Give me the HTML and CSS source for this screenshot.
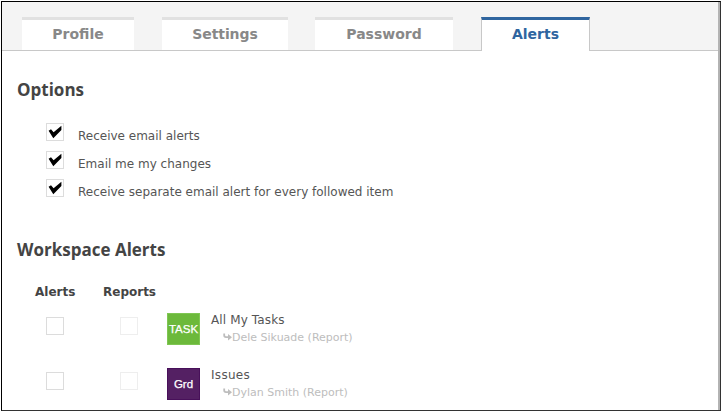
FILE: index.html
```html
<!DOCTYPE html>
<html lang="en">
<head>
<meta charset="utf-8">
<title>Alerts</title>
<link rel="stylesheet" href="styles.css">
</head>
<body>
<div class="window">
  <nav class="tabs">
    <a class="tab profile"><span>Profile</span></a>
    <a class="tab settings"><span>Settings</span></a>
    <a class="tab password"><span>Password</span></a>
    <a class="tab active"><span>Alerts</span></a>
  </nav>
  <main>
    <h2 class="options-title">Options</h2>
    <ul class="options">
      <li><i class="box"><svg viewBox="0 0 16 16"><path d="M1.6 6.8 4 5.2 6.6 8.2 14.4 1.8V6L6.3 14.2Z"/></svg></i><span>Receive email alerts</span></li>
      <li><i class="box"><svg viewBox="0 0 16 16"><path d="M1.6 6.8 4 5.2 6.6 8.2 14.4 1.8V6L6.3 14.2Z"/></svg></i><span>Email me my changes</span></li>
      <li><i class="box"><svg viewBox="0 0 16 16"><path d="M1.6 6.8 4 5.2 6.6 8.2 14.4 1.8V6L6.3 14.2Z"/></svg></i><span>Receive separate email alert for every followed item</span></li>
    </ul>
    <h2 class="workspace-title">Workspace Alerts</h2>
    <div class="columns"><b class="c1">Alerts</b><b class="c2">Reports</b></div>
    <div class="row">
      <i class="box"></i><i class="box faint"></i>
      <div class="tile green">TASK</div>
      <div class="info">
        <div class="name n1">All My Tasks</div>
        <div class="owner"><svg viewBox="0 0 9 8"><path d="M1.2 .5V2.2Q1.2 4.2 3 4.2H6" fill="none" stroke="#bdbdbd" stroke-width="1.8"/><path d="M5 1 9 4.2 5 7.4Z" fill="#bdbdbd"/></svg><span>Dele Sikuade (Report)</span></div>
      </div>
    </div>
    <div class="row">
      <i class="box"></i><i class="box faint"></i>
      <div class="tile purple">Grd</div>
      <div class="info">
        <div class="name n2">Issues</div>
        <div class="owner"><svg viewBox="0 0 9 8"><path d="M1.2 .5V2.2Q1.2 4.2 3 4.2H6" fill="none" stroke="#bdbdbd" stroke-width="1.8"/><path d="M5 1 9 4.2 5 7.4Z" fill="#bdbdbd"/></svg><span>Dylan Smith (Report)</span></div>
      </div>
    </div>
  </main>
</div>
</body>
</html>
```
FILE: styles.css
```css
* { box-sizing: border-box; }
body {
  margin: 0;
  height: 412px;
  padding: 1px;
  overflow: hidden;
  background: #fff;
  font-family: "DejaVu Sans", sans-serif;
  font-size: 12px;
  color: #555;
  white-space: nowrap;
}
.window {
  height: 410px;
  border: 1px solid #000;
  border-right-color: #333;
  border-bottom-color: #333;
  overflow: hidden;
  box-shadow: inset -2px 0 #b3b3b3;
  padding-right: 2px;
}
.tabs {
  display: flex;
  height: 49px;
  padding: 15px 0 0 20px;
  background: #f4f4f4;
  border-bottom: 1px solid #c8c8c8;
}
.tab {
  height: 33px;
  margin-right: 28px;
  border-top: 3px solid #e1e1e1;
  background: #fff;
  color: #888;
  font-size: 14px;
  font-weight: bold;
  line-height: 28px;
  text-align: center;
}
.profile { width: 112px; }
.settings { width: 126px; margin-right: 27px; letter-spacing: -0.1px; }
.password { width: 138px; }
.active {
  width: 109px;
  height: 34px;
  border-left: 1px solid #c8c8c8;
  border-right: 1px solid #c8c8c8;
  border-top-color: #2f659f;
  color: #2f659f;
}
main { padding-left: 15px; }
h2 {
  margin: 0;
  font: bold 17px/24px "Open Sans", sans-serif;
  color: #444;
}
.options-title { padding-top: 27px; height: 72px; }
.options { margin: 0; padding: 0 0 0 29px; list-style: none; }
.options li { display: flex; height: 28px; }
.options span { margin: 4px 0 0 14px; line-height: 18px; }
.box {
  flex: none;
  display: block;
  width: 18px;
  height: 18px;
  border: 1px solid #dcdcdc;
  background: #fff;
}
.box svg { display: block; width: 16px; height: 16px; }
.faint { margin-left: 56px; border-color: #eee; }
.workspace-title { margin-top: 31px; }
.columns {
  display: flex;
  height: 50px;
  padding: 21px 0 0 18px;
  line-height: 18px;
  color: #444;
}
.c1 { width: 68px; }
.row { display: flex; height: 55px; padding-left: 29px; }
.row .box { margin-top: 5px; }
.tile {
  width: 33px;
  height: 32px;
  margin: 1px 0 0 29px;
  font: 11.5px/30px "Liberation Sans", sans-serif;
  -webkit-text-stroke: 0.25px #fff;
  color: #fff;
  text-align: center;
}
.green { background: #6cb93b; border: 1px solid #7fc653; }
.purple { background: #542063; border: 1px solid #48105a; }
.info { margin-left: 11px; padding-top: 1px; }
.name { height: 17px; line-height: 14px; }
.n1 { letter-spacing: 0.13px; }
.n2 { letter-spacing: 0.3px; }
.owner { display: flex; align-items: center; height: 14px; padding-left: 12px; font-size: 11px; color: #bdbdbd; }
.owner svg { width: 9px; height: 8px; }
```
